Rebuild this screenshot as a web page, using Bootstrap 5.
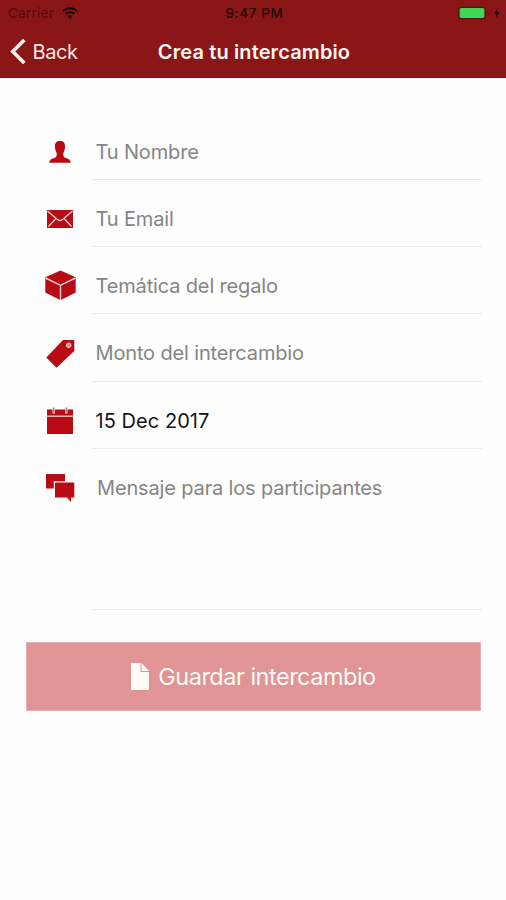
<!DOCTYPE html>
<html lang="es">
<head>
<meta charset="utf-8">
<meta name="viewport" content="width=device-width, initial-scale=1">
<title>Crea tu intercambio</title>
<link href="https://cdn.jsdelivr.net/npm/bootstrap@5.3.0/dist/css/bootstrap.min.css" rel="stylesheet">
<style>
body{font-family:Inter,"Liberation Sans",sans-serif;background:#fefefe;height:900px;overflow:hidden}
svg{display:block;flex:none}
.top{background:#8b1618;height:78px;border-bottom:1px solid #7d0f10}
.status{display:grid;grid-template-columns:1fr auto 1fr;height:26px;padding:0 5px 0 8px;font-size:13.5px;line-height:26px;color:#210506}
.carrier{color:#4d0b0c;letter-spacing:.25px}
.clock{font-weight:500;letter-spacing:.6px}
.titlebar{display:grid;grid-template-columns:1fr auto 1fr;height:51px;padding:0 8px 0 10px;color:#fff5f2}
.back{font-size:20px;letter-spacing:-.4px;color:#fbe6e2}
.back-label{padding-left:6.5px}
.heading{font-size:20px;font-weight:600;letter-spacing:.12px;line-height:24px;padding-top:1px}
.fields{padding:34.5px 24px 0 42px}
.field{height:67.3px}
.ico{width:36px;margin-right:15px;color:#b90b14}
.ico svg{margin:auto}
.line{border-bottom:1.5px solid #ebebeb;color:#858585;font-size:20px;letter-spacing:-.15px;padding-left:2.5px;line-height:27px;padding-top:26px;height:67.3px}
.ico-wrap{padding-top:22.3px}
.message{height:161.5px}
.message .line{height:161px;padding-left:4px}
.filled{color:#161616;letter-spacing:.05px}
.save{background:#e09496;border:1px solid #e6aeb0;color:#fffaf5;margin:31.5px 25px 0 26px;height:69px;font-size:23.5px;letter-spacing:-.5px;border-radius:0}
.save-label{padding-left:9px}
</style>
</head>
<body>
<header class="top">
  <div class="status">
    <div class="d-flex align-items-center"><span class="carrier">Carrier</span>
      <svg class="ms-2" width="16" height="12" viewBox="0 0 16 12" fill="none" stroke="#210506" stroke-width="2.1"><path d="M.9 4.2a10.2 10.2 0 0 1 14.2 0M3.6 7a6.4 6.4 0 0 1 8.8 0"/><path d="M8 11.8 5.4 9.2a3.8 3.8 0 0 1 5.2 0z" fill="#210506" stroke="none"/></svg></div>
    <span class="clock">9:47 PM</span>
    <div class="d-flex align-items-center justify-content-end">
      <svg width="43" height="14" viewBox="0 0 43 14"><rect x=".8" y="1.3" width="26.4" height="11.4" rx="2.5" fill="#3fd655" stroke="#641011" stroke-width="1.6"/><path d="M29 5v4q2-.5 2-2t-2-2z" fill="#641011"/><path d="M39.7 2 36 7.5h2.3L37.6 12l4-5.7h-2.4z" fill="#210506"/></svg>
    </div>
  </div>
  <div class="titlebar">
    <div class="d-flex align-items-center back"><svg width="16" height="27" viewBox="0 0 16 27" fill="none" stroke="#fff5f2" stroke-width="3.6"><path d="M14.3 2 2.8 13.5 14.3 25"/></svg><span class="back-label">Back</span></div>
    <h1 class="heading m-0 align-self-center">Crea tu intercambio</h1>
  </div>
</header>
<main>
  <div class="fields">
    <div class="field d-flex">
      <div class="ico ico-wrap"><svg width="24" height="34" viewBox="0 0 24 34" fill="currentColor"><path d="M12 6c3.700 0 5.200 2 5 5.800-.1 2.700-.7 4.700-1.700 6.200-.2 2.500.2 4.200 2.200 5 2.800.8 4.700 1.200 5.300 4.700H1.200c.6-3.500 2.500-3.900 5.300-4.700 2-.8 2.400-2.500 2.200-5-1-1.500-1.600-3.500-1.700-6.200C6.800 8 8.300 6 12 6z"/></svg></div>
      <div class="line flex-fill">Tu Nombre</div>
    </div>
    <div class="field d-flex">
      <div class="ico ico-wrap"><svg width="28" height="34" viewBox="0 0 28 34"><path d="M1 8h26v18H1z" fill="currentColor"/><path d="m1.500 9 9.500 8.300q3 2.500 6 0L26.500 9M2.500 24.500l7.500-8m15.500 8-7.500-8" fill="none" stroke="#f7d9da" stroke-width="1.200"/></svg></div>
      <div class="line flex-fill">Tu Email</div>
    </div>
    <div class="field d-flex">
      <div class="ico ico-wrap"><svg width="32" height="34" viewBox="0 0 32 34"><path d="m16.500 1.500 15.200 6.800v15.200l-15.200 7.700-15.200-7.700V8.300z" fill="currentColor"/><path d="m1.500 9 15 7.300 15-7.300M16.500 16.300v15" fill="none" stroke="#f5d2d4" stroke-width="1.400"/></svg></div>
      <div class="line flex-fill">Temática del regalo</div>
    </div>
    <div class="field d-flex">
      <div class="ico ico-wrap"><svg width="30" height="34" viewBox="0 0 30 34"><path d="M18 3h10.300q1 0 1 1v10L11.500 30.700 1.300 20.500z" fill="currentColor"/><circle cx="23.700" cy="8.300" r="2.300" fill="#e58c90" stroke="#f7dfe0"/></svg></div>
      <div class="line flex-fill">Monto del intercambio</div>
    </div>
    <div class="field d-flex">
      <div class="ico ico-wrap"><svg width="28" height="34" viewBox="0 0 28 34"><path d="M1 5.500h26V30H1z" fill="currentColor"/><path d="M1 12.200h26" stroke="#f4cfd1" stroke-width="1.300"/><path d="M7.700 3.500v6M20.300 3.500v6" stroke="#f6dede" stroke-width="2.400"/><path d="M7.700 3.500v5M20.300 3.500v5" stroke="#c05057" stroke-width="1"/></svg></div>
      <div class="line filled flex-fill">15 Dec 2017</div>
    </div>
    <div class="message d-flex">
      <div class="ico ico-wrap"><svg width="30" height="34" viewBox="0 0 30 34" fill="currentColor"><path d="M1 3h19v7.200H8.800v7.300H1z"/><path d="M10 11.500h19.300v15H26v4.700l-4-4.700H10z"/></svg></div>
      <div class="line flex-fill">Mensaje para los participantes</div>
    </div>
  </div>
  <div class="save d-flex align-items-center justify-content-center">
    <svg width="18" height="27" viewBox="0 0 18 27"><path d="M0 0h9.500v9H18v18H0z" fill="#fffaf5"/><path d="m10.500 0 7.500 8h-7.500z" fill="#fffaf5"/></svg>
    <span class="save-label">Guardar intercambio</span>
  </div>
</main>
<script src="https://cdn.jsdelivr.net/npm/bootstrap@5.3.0/dist/js/bootstrap.bundle.min.js"></script>
</body>
</html>
